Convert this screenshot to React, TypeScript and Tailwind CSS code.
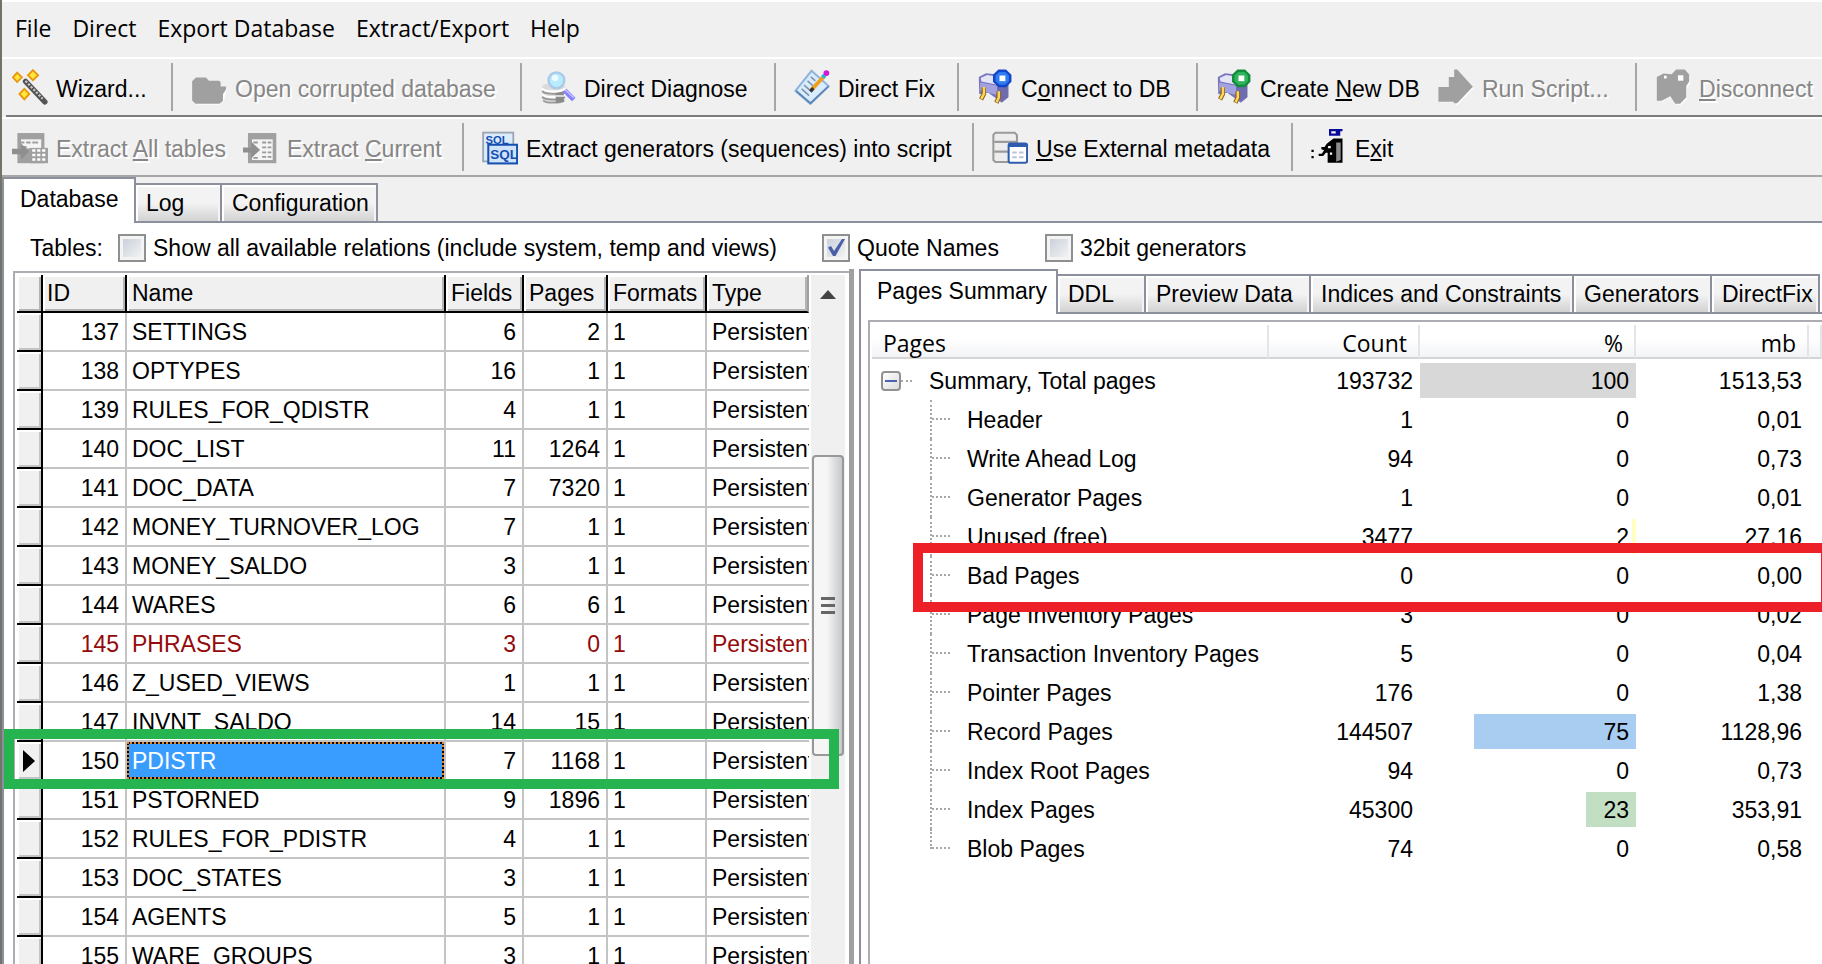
import type { ReactNode } from "react";
import clsx from "clsx";

type TableRow = {
  id: number;
  name: string;
  fields: number;
  pages: number;
};

type PageRow = {
  label: string;
  count: number;
  percent: number;
  mb: string;
  color?: string;
};

const tables: TableRow[] = [
  { id: 137, name: "SETTINGS", fields: 6, pages: 2 },
  { id: 138, name: "OPTYPES", fields: 16, pages: 1 },
  { id: 139, name: "RULES_FOR_QDISTR", fields: 4, pages: 1 },
  { id: 140, name: "DOC_LIST", fields: 11, pages: 1264 },
  { id: 141, name: "DOC_DATA", fields: 7, pages: 7320 },
  { id: 142, name: "MONEY_TURNOVER_LOG", fields: 7, pages: 1 },
  { id: 143, name: "MONEY_SALDO", fields: 3, pages: 1 },
  { id: 144, name: "WARES", fields: 6, pages: 6 },
  { id: 145, name: "PHRASES", fields: 3, pages: 0 },
  { id: 146, name: "Z_USED_VIEWS", fields: 1, pages: 1 },
  { id: 147, name: "INVNT_SALDO", fields: 14, pages: 15 },
  { id: 150, name: "PDISTR", fields: 7, pages: 1168 },
  { id: 151, name: "PSTORNED", fields: 9, pages: 1896 },
  { id: 152, name: "RULES_FOR_PDISTR", fields: 4, pages: 1 },
  { id: 153, name: "DOC_STATES", fields: 3, pages: 1 },
  { id: 154, name: "AGENTS", fields: 5, pages: 1 },
  { id: 155, name: "WARE_GROUPS", fields: 3, pages: 1 },
];

const selectedId = 150;

const pageRows: PageRow[] = [
  { label: "Header", count: 1, percent: 0, mb: "0,01" },
  { label: "Write Ahead Log", count: 94, percent: 0, mb: "0,73" },
  { label: "Generator Pages", count: 1, percent: 0, mb: "0,01" },
  { label: "Unused (free)", count: 3477, percent: 2, mb: "27,16", color: "bg-[#ffffc4]" },
  { label: "Bad Pages", count: 0, percent: 0, mb: "0,00" },
  { label: "Page Inventory Pages", count: 3, percent: 0, mb: "0,02" },
  { label: "Transaction Inventory Pages", count: 5, percent: 0, mb: "0,04" },
  { label: "Pointer Pages", count: 176, percent: 0, mb: "1,38" },
  { label: "Record Pages", count: 144507, percent: 75, mb: "1128,96", color: "bg-[#a9ccf1]" },
  { label: "Index Root Pages", count: 94, percent: 0, mb: "0,73" },
  { label: "Index Pages", count: 45300, percent: 23, mb: "353,91", color: "bg-[#c3dfc3]" },
  { label: "Blob Pages", count: 74, percent: 0, mb: "0,58" },
];

/* Icons, all drawn on a 16x16 grid */

const Icon = ({ children }: { children: ReactNode }) => (
  <svg viewBox="0 0 16 16" className="h-9 w-9 shrink-0" aria-hidden="true">
    {children}
  </svg>
);

const WizardIcon = () => (
  <Icon>
    <path d="M6 5.5 14.6 14.6" stroke="#555" strokeWidth="2.4" strokeLinecap="round" />
    <path d="M6 5.3 13.6 13.2" stroke="#c9c9c9" strokeWidth="1" strokeDasharray="1 .7" />
    <g fill="#ffe63b" stroke="#e8960c" strokeWidth=".8">
      <path d="M2.3 1.6 4.4 3.7 2.3 5.8.4 3.7z" />
      <path d="M9.3.5 11.6 2.8 9.3 5 7.1 2.8z" />
      <path d="M5.5 8.8 7.7 11.1 5.5 13.5 3.3 11.1z" />
    </g>
  </Icon>
);

const FolderIcon = () => (
  <Icon>
    <path d="M1.2 6 2.4 5h4.8l1.5 1.6h4.5v1.6h2.6v1l-1.3 5.2-1.6 1.4H2.6L1.2 14.6z" fill="#fff" />
    <path d="M.5 5.4 2.2 3.8h4.4L8 5.2h4.6l.6.8v1.8h2.4V9l-1.4 2.2v3l-1.5 1.2H2L.5 14z" fill="#a0a0a0" />
  </Icon>
);

const DiagnoseIcon = () => (
  <Icon>
    <path d="M1 7.5c0-1.6 10-1.6 10 0v6c0 1.8-10 1.8-10 0z" fill="#dcdcdc" />
    <path d="M1 8.7c1 1.7 9 1.7 10 0M1 11.2c1 1.7 9 1.7 10 0" fill="none" stroke="#fff" strokeWidth=".9" />
    <path
      d="M1 9.8c1 1.7 9 1.7 10 0M1 12.3c1 1.7 9 1.7 10 0M1.4 14c1 1.3 8 1.3 9.4 0"
      fill="none"
      stroke="#989898"
      strokeWidth=".8"
    />
    <path d="M7 10.8 10.6 10v4.5l-3.6.6z" fill="#8a8a8a" />
    <path d="M7 12h3.6" stroke="#eee" strokeWidth=".7" />
    <circle cx="7.3" cy="5" r="3.5" fill="#b9ebff" stroke="#a9cbe8" strokeWidth="1.1" />
    <circle cx="6.7" cy="4" r="1.4" fill="#fff" opacity=".8" />
    <path d="m11 9.6 4 4" stroke="#8482ff" strokeWidth="2.2" />
    <path d="m11.2 9.2 3.8 3.6" stroke="#c5c4ff" strokeWidth=".7" />
  </Icon>
);

const FixIcon = () => (
  <Icon>
    <path d="M7.8.8 15.4 7.6 7.3 15.5.6 9.7z" fill="#d9ecfb" stroke="#8fb4dc" strokeWidth=".9" />
    <path d="m1 9.8 6.3 5.4 8-7.5" fill="none" stroke="#5b86b8" strokeWidth=".8" />
    <path d="m7.5 3.5 2 1.8M6 5.3 9 8M4.5 7.2 8 10.3M3.4 8.8l3.3 3" stroke="#7d94b0" strokeWidth=".7" />
    <path d="M7.5 9.5 13.6 3" stroke="#f0a020" strokeWidth="1.7" />
    <path d="M7.3 9.9 8.6 8.5" stroke="#333" strokeWidth="1.5" />
    <path d="m12.7 3.8 1-1" stroke="#20b8d8" strokeWidth="1.9" />
    <circle cx="14.4" cy="1.8" r="1.3" fill="#d416d8" />
  </Icon>
);

const PlugIcon = ({ dark, light }: { dark: string; light: string }) => (
  <Icon>
    <path d="M.8 3.6 4 1.9l7 .8 3 3v6.8L11 15 8.4 13 5 10.5l-4 .7z" fill="#7976bd" />
    <path d="M1.6 4 4.5 2.7l6.5 1L9 7 2 5.6z" fill="#e4e4f8" />
    <path d="M1.4 6 9 7.4v4.2L1.4 9.6z" fill="#a3a2e0" />
    <path d="M9 7.4 13.8 5v7.4L11 14.4 9 11.6z" fill="#6f6cae" />
    <path d="M3 8.2v3L1.8 13.5M9.6 10v2.8l-1 2.2" fill="none" stroke="#8a6412" strokeWidth="2" />
    <path d="M3.1 8v3l-1.2 2.3M9.7 9.9v2.8l-1 2.1" fill="none" stroke="#ffd560" strokeWidth="1.1" />
    <path d="M9.5.2h3.4l2.4 2.3v3.2l-2.4 2.4H9.5L7.1 5.7V2.5z" fill={dark} />
    <path d="M9.9 1.3h2.7l1.6 1.6v2.4L12.6 7H9.9L8.2 5.3V2.9z" fill={light} />
    <rect x="10" y="2.9" width="2.6" height="2.5" fill="#fff" />
  </Icon>
);

const RunIcon = () => (
  <Icon>
    <path d="M.8 8.6h4.6V3.4h3V.9l7.5 7.5L8.6 16H8l-.5-1.2H.8z" fill="#fff" />
    <path d="M.2 8h4.6V3.6h2.4V.2h1.3l7 7.7-7 7.3H7v-.6H.2z" fill="#a0a0a0" />
  </Icon>
);

const DisconnectIcon = () => (
  <Icon>
    <path
      d="M1.6 4.6 4.6 3l3.4.4L9.6 1h3.8l2.2 2.2v3.2l-1.3 2v5.2L11.4 16H9.8l-2.4-3.2H5.8l-2.6 2L1.6 13z"
      fill="#fff"
    />
    <path
      d="M.8 3.6 3.8 2l3.6.3L9.4.2h3.8l2 2.2v3.2l-1.3 2v5L11.2 15.4H9l-2.2-3.3-3.8 2H.8z"
      fill="#a0a0a0"
    />
    <rect x="4" y="3" width="1.2" height="1.2" fill="#fff" />
    <rect x="10.2" y="2.8" width="2.4" height="2.4" fill="#fff" />
  </Icon>
);

const ExtractAllIcon = () => (
  <Icon>
    <path d="M2.4 1.8h12v13.4H2.4z" fill="#a0a0a0" />
    <path d="M4 4.6h9v4H4z" fill="#f4f4f4" />
    <path d="M4 6h1.5M6.3 6h2M9 6h2.6M4.5 8h2" stroke="#a0a0a0" strokeWidth=".8" />
    <path d="M8 8.4h8v6.8H8z" fill="#a0a0a0" />
    <path d="M9 9.6h6.4M9 11.6h6.4M9 13.6h6.4" stroke="#fff" strokeWidth="1.1" strokeDasharray="1.4 .8" />
    <path d="M0 8.8h4V6.4L7.6 10 4 13.6v-2.4H0z" fill="#8f8f8f" />
  </Icon>
);

const ExtractCurrentIcon = () => (
  <Icon>
    <path d="M2.2 1.8h12.6v13.4H2.2z" fill="#a0a0a0" />
    <path d="M4 4.6h9.2v9.2H4z" fill="#f4f4f4" />
    <path
      d="M8.5 6h1.8M11 6h1.6M8.5 8.2h1.8M11 8.2h1.6M8.5 10.4h1.8M11 10.4h1.6M8.5 12.4h1.8M11 12.4h1.6M4.6 6h2M4.6 12.8h2"
      stroke="#999"
      strokeWidth=".8"
    />
    <path d="M0 8.2h3.6V5.6l4 3.7-4 3.7v-2.6H0z" fill="#8f8f8f" />
  </Icon>
);

const SqlIcon = () => (
  <Icon>
    <rect x=".5" y="1.6" width="13.4" height="12.8" fill="#dcebfa" stroke="#9aa4b2" strokeWidth=".8" />
    <text x="1.6" y="6.6" className="font-['Liberation_Sans'] text-[5px] font-bold" fill="#1550b0">
      SQL
    </text>
    <rect x="2.8" y="7" width="12.8" height="8.3" fill="#cfe4fb" stroke="#1550b0" strokeWidth=".9" />
    <text x="3.7" y="13.4" className="font-['Liberation_Sans'] text-[6px] font-bold" fill="#1550b0">
      SQL
    </text>
  </Icon>
);

const MetadataIcon = () => (
  <Icon>
    <path d="M1.5 1.7h8.6l1 1v12H1.5l-.9-.9V2.6z" fill="#ededed" stroke="#9a9a9a" strokeWidth=".9" />
    <path d="M1 5.7h10M1 10h7" stroke="#9a9a9a" strokeWidth="1" />
    <rect x="7.4" y="6.4" width="8.2" height="8.6" rx=".8" fill="#fff" stroke="#2e5cb0" strokeWidth=".9" />
    <path d="M7.4 7.2h8.2" stroke="#2e5cb0" strokeWidth="1.6" />
    <path d="M9 10.4h2M12 10.4h2M9 12.6h2M12 12.6h2" stroke="#b9c4d8" strokeWidth=".9" />
  </Icon>
);

const ExitIcon = () => (
  <Icon>
    <path d="M8 0h6v1h-1v2H8zM9 1v1h2V1z" fill="#0a0a9c" fillRule="evenodd" />
    <path d="M8.4 5.4 10 4.2h4V15H7.4v-4.5H6.6L5.4 12H3.4v-1h1.4l1-1.6L4.6 9V8H6l1-1.4z" fill="#000" />
    <path d="M11.2 6h2v7.8l-2 .8z" fill="#8c8c8c" />
    <path d="M7.6 7.5h1.2v1H7.6zM8.4 10.4h1v1h-1z" fill="#fff" />
    <path d="M.2 9.2h1v1h-1zM.2 12h1v1h-1z" fill="#000" />
  </Icon>
);

/* Window parts */

type ToolButtonProps = {
  icon: ReactNode;
  width?: string;
  disabled?: boolean;
  children: ReactNode;
};

const ToolButton = ({ icon, width, disabled, children }: ToolButtonProps) => (
  <button
    type="button"
    disabled={disabled}
    className={clsx(
      "flex shrink-0 items-center gap-2 text-left whitespace-nowrap",
      width,
      disabled && "text-[#868686] [text-shadow:2px_2px_0_#fff]",
    )}
  >
    {icon}
    <span className="pt-1">{children}</span>
  </button>
);

const Separator = () => <div className="mr-[18px] h-12 w-0.5 shrink-0 bg-[#a6a6a6]" />;

const MainMenu = () => (
  <nav className="flex h-[57px] shrink-0 items-center gap-[21px] border-t-2 border-white pb-1 pl-[13px] font-['Open_Sans',sans-serif] text-[23px]">
    {["File", "Direct", "Export Database", "Extract/Export", "Help"].map((item) => (
      <button key={item} type="button" className="shrink-0">
        {item}
      </button>
    ))}
  </nav>
);

const Toolbars = () => (
  <div className="shrink-0 border-t-2 border-white">
    <div className="ml-1 flex h-[58px] items-center border-b-2 border-[#7c7c7c] pl-1.5">
      <ToolButton icon={<WizardIcon />} width="w-[159px]">
        Wizard...
      </ToolButton>
      <Separator />
      <ToolButton icon={<FolderIcon />} width="w-[329px]" disabled>
        Open corrupted database
      </ToolButton>
      <Separator />
      <ToolButton icon={<DiagnoseIcon />} width="w-[234px]">
        Direct Diagnose
      </ToolButton>
      <Separator />
      <ToolButton icon={<FixIcon />} width="w-[163px]">
        Direct Fix
      </ToolButton>
      <Separator />
      <ToolButton icon={<PlugIcon dark="#1246c8" light="#2f7df0" />} width="w-[219px]">
        C<u>o</u>nnect to DB
      </ToolButton>
      <Separator />
      <ToolButton icon={<PlugIcon dark="#138a3c" light="#2fb45c" />} width="w-[222px]">
        Create <u>N</u>ew DB
      </ToolButton>
      <ToolButton icon={<RunIcon />} width="w-[197px]" disabled>
        Run Script...
      </ToolButton>
      <Separator />
      <ToolButton icon={<DisconnectIcon />} disabled>
        <u>D</u>isconnect
      </ToolButton>
    </div>
    <div className="flex h-[60px] items-center border-t-2 border-b-2 border-t-white border-b-[#a6a6a6] pl-2.5">
      <ToolButton icon={<ExtractAllIcon />} width="w-[231px]" disabled>
        Extract <u>A</u>ll tables
      </ToolButton>
      <ToolButton icon={<ExtractCurrentIcon />} width="w-[219px]" disabled>
        Extract <u>C</u>urrent
      </ToolButton>
      <Separator />
      <ToolButton icon={<SqlIcon />} width="w-[490px]">
        Extract generators (sequences) into script
      </ToolButton>
      <Separator />
      <ToolButton icon={<MetadataIcon />} width="w-[299px]">
        <u>U</u>se External metadata
      </ToolButton>
      <Separator />
      <ToolButton icon={<ExitIcon />}>
        E<u>x</u>it
      </ToolButton>
    </div>
  </div>
);

type TabProps = {
  label: string;
  width: string;
  active?: boolean;
};

const Tab = ({ label, width, active }: TabProps) => (
  <button
    type="button"
    role="tab"
    aria-selected={Boolean(active)}
    className={clsx(
      "shrink-0 border-[#8c8f9c] text-left whitespace-nowrap",
      width,
      active
        ? "h-full border-t-2 border-r-2 bg-white pb-1 pl-4"
        : "h-10 border-2 border-l-0 bg-linear-to-b from-[#f3f3f3] from-50% to-[#d2d2d2] pl-2.5 shadow-[inset_2px_2px_0_#fff,inset_-2px_0_0_#f4f4f4]",
    )}
  >
    {label}
  </button>
);

type CheckboxProps = {
  label: string;
  width?: string;
  defaultChecked?: boolean;
};

const Checkbox = ({ label, width, defaultChecked }: CheckboxProps) => (
  <label className={clsx("flex shrink-0 items-center gap-[7px] whitespace-nowrap", width)}>
    <span className="grid h-7 w-7 place-items-center">
      <input
        type="checkbox"
        defaultChecked={defaultChecked}
        className="peer col-start-1 row-start-1 h-7 w-7 appearance-none border-2 border-[#8e8f8f] bg-linear-to-br from-[#c4ccd6] to-[#f8f8f8] shadow-[inset_0_0_0_3px_#f4f4f4]"
      />
      <svg
        viewBox="0 0 20 20"
        className="pointer-events-none invisible col-start-1 row-start-1 h-5 w-5 peer-checked:visible"
        aria-hidden="true"
      >
        <path d="M2 9.5 5 8l3 5L16 1h3L9.5 18H7z" fill="#4a5fa5" />
      </svg>
    </span>
    {label}
  </label>
);

const headCell =
  "border-r-2 border-b-2 border-black bg-[#f0f0f0] p-0 text-left font-normal shadow-[inset_2px_2px_0_#fff,inset_-2px_-2px_0_#b4b4b4]";
const bodyCell = "border-r-2 border-b-2 border-[#c4c4c4] p-0";

const TablesGrid = () => (
  <table className="w-[792px] table-fixed border-separate border-spacing-0">
    <colgroup>
      <col className="w-[26px]" />
      <col className="w-[84px]" />
      <col className="w-[319px]" />
      <col className="w-[78px]" />
      <col className="w-[84px]" />
      <col className="w-[99px]" />
      <col className="w-[102px]" />
    </colgroup>
    <thead>
      <tr className="h-[38px]">
        <th className={headCell} />
        <th className={clsx(headCell, "pl-1")}>ID</th>
        <th className={clsx(headCell, "pl-[5px]")}>Name</th>
        <th className={clsx(headCell, "pl-[5px]")}>Fields</th>
        <th className={clsx(headCell, "pl-[5px]")}>Pages</th>
        <th className={clsx(headCell, "pl-[5px]")}>Formats</th>
        <th className={clsx(headCell, "border-r-[#a0a0a0] pl-[5px]")}>Type</th>
      </tr>
    </thead>
    <tbody>
      {tables.map((row) => (
        <tr key={row.id} className={clsx("h-[39px]", row.pages === 0 && "text-[#930a0a]")}>
          <td className="border-r-2 border-b-2 border-black bg-[#f0f0f0] p-0 shadow-[inset_2px_2px_0_#fff,inset_-2px_-2px_0_#c4c4c4]">
            {row.id === selectedId && (
              <svg viewBox="0 0 12 22" className="ml-1.5 h-[22px] w-3" aria-hidden="true">
                <path d="M0 0 12 11 0 22z" />
              </svg>
            )}
          </td>
          <td className={clsx(bodyCell, "pr-1.5 text-right")}>{row.id}</td>
          <td className={clsx(bodyCell, row.id === selectedId ? "bg-black" : "pl-[5px]")}>
            {row.id === selectedId ? (
              <div className="flex h-[37px] items-center border-2 border-dotted border-[#e0862a] bg-[#399cff] bg-clip-padding pl-[3px] text-white">
                {row.name}
              </div>
            ) : (
              row.name
            )}
          </td>
          <td className={clsx(bodyCell, "pr-1.5 text-right")}>{row.fields}</td>
          <td className={clsx(bodyCell, "pr-1.5 text-right")}>{row.pages}</td>
          <td className={clsx(bodyCell, "pl-[5px]")}>1</td>
          <td className="overflow-hidden border-b-2 border-[#c4c4c4] p-0 pl-[5px]">Persistent</td>
        </tr>
      ))}
    </tbody>
  </table>
);

const GridScrollbar = () => (
  <div className="flex w-[34px] shrink-0 flex-col items-center bg-[#f0f0f0]">
    <svg viewBox="0 0 16 9" className="mt-[15px] h-[9px] w-4" aria-hidden="true">
      <path d="M8 0 16 9H0z" fill="#444" />
    </svg>
    <div className="mt-[156px] flex h-[301px] w-8 flex-col items-center justify-center gap-1 rounded-sm border-2 border-[#989898] bg-linear-to-r from-[#f6f6f6] from-45% to-[#c6c8cb]">
      <span className="h-[3px] w-3.5 bg-[#666]" />
      <span className="h-[3px] w-3.5 bg-[#666]" />
      <span className="h-[3px] w-3.5 bg-[#666]" />
    </div>
  </div>
);

const TablesPanel = () => (
  <section className="relative flex w-[850px] shrink-0 pt-0.5 pl-[9px]">
    <div className="flex w-[836px] shrink-0 gap-0.5 overflow-hidden border-t-2 border-l-2 border-[#abadb3] pt-0.5 pl-0.5">
      <div className="w-[792px] shrink-0">
        <TablesGrid />
      </div>
      <GridScrollbar />
    </div>
    <div className="-mt-0.5 w-[5px] shrink-0 bg-[#a0a0a0]" />
    <div className="absolute top-[460px] left-0 h-[60px] w-[835px] border-[10px] border-[#25b450]" />
  </section>
);

const PercentCell = ({ percent, color }: { percent: number; color?: string }) => (
  <td className="relative p-0 pr-[7px] text-right">
    {color && (
      <div className={clsx("absolute inset-y-0.5 right-0", color)} style={{ width: `${percent}%` }} />
    )}
    <span className="relative">{percent}</span>
  </td>
);

const treeHead =
  "flex h-[34px] items-center border-r-2 border-b-2 border-r-[#e4e5e8] border-b-[#d5d5d5] bg-linear-to-b from-white from-40% to-[#f3f4f6] pt-1";

const PagesTree = () => (
  <table className="w-full table-fixed border-separate border-spacing-0">
    <colgroup>
      <col className="w-[397px]" />
      <col className="w-[151px]" />
      <col className="w-[216px]" />
      <col className="w-[173px]" />
      <col />
    </colgroup>
    <thead className="font-['Open_Sans',sans-serif] text-[23px]">
      <tr className="h-9">
        <th className="p-0 align-top font-normal">
          <div className={clsx(treeHead, "pl-[11px]")}>Pages</div>
        </th>
        <th className="p-0 align-top font-normal">
          <div className={clsx(treeHead, "justify-end pr-[11px]")}>Count</div>
        </th>
        <th className="p-0 align-top font-normal">
          <div className={clsx(treeHead, "justify-end pr-[11px]")}>%</div>
        </th>
        <th className="p-0 align-top font-normal">
          <div className={clsx(treeHead, "justify-end pr-[11px]")}>mb</div>
        </th>
        <th className="p-0 align-top font-normal">
          <div className={clsx(treeHead, "border-r-0")} />
        </th>
      </tr>
    </thead>
    <tbody>
      <tr className="h-[39px]">
        <td className="p-0">
          <div className="flex items-center pl-[9px]">
            <button
              type="button"
              aria-label="Collapse Summary"
              className="flex h-5 w-5 items-center justify-center rounded-sm border-2 border-[#919191] bg-linear-to-br from-white to-[#dcdcdc]"
            >
              <span className="h-0.5 w-3 bg-[#4b63b0]" />
            </button>
            <span className="mr-[17px] w-[11px] border-b-2 border-dotted border-[#a8a8a8]" />
            Summary, Total pages
          </div>
        </td>
        <td className="p-0 pr-[7px] text-right">193732</td>
        <PercentCell percent={100} color="bg-[#d8d8d8]" />
        <td className="p-0 pr-[7px] text-right">1513,53</td>
        <td />
      </tr>
      {pageRows.map((row, index) => (
        <tr key={row.label} className="h-[39px]">
          <td className="p-0">
            <div className="flex h-[39px] items-center pl-[58px]">
              <div
                className={clsx(
                  "mr-[17px] w-5 border-l-2 border-dotted border-[#a8a8a8]",
                  index === pageRows.length - 1 ? "h-5 self-start" : "h-full",
                )}
              >
                <div className="h-5 border-b-2 border-dotted border-[#a8a8a8]" />
              </div>
              {row.label}
            </div>
          </td>
          <td className="p-0 pr-[7px] text-right">{row.count}</td>
          <PercentCell percent={row.percent} color={row.color} />
          <td className="p-0 pr-[7px] text-right">{row.mb}</td>
          <td />
        </tr>
      ))}
    </tbody>
  </table>
);

const DetailsPanel = () => (
  <section className="ml-[5px] flex min-w-0 flex-1 flex-col border-l-2 border-[#8c8f9c]">
    <div role="tablist" className="flex h-[45px] shrink-0 items-end">
      <Tab label="Pages Summary" width="w-[197px]" active />
      <Tab label="DDL" width="w-[88px]" />
      <Tab label="Preview Data" width="w-[165px]" />
      <Tab label="Indices and Constraints" width="w-[263px]" />
      <Tab label="Generators" width="w-[138px]" />
      <Tab label="DirectFix" width="w-[108px]" />
      <div className="flex-1 border-b-2 border-[#8c8f9c]" />
    </div>
    <div className="relative mt-1.5 ml-[7px] flex-1 border-t-2 border-l-2 border-[#abadb3] pt-[3px] pl-0.5">
      <PagesTree />
      <div className="absolute top-[221px] right-0 left-[43px] h-[69px] border-[10px] border-r border-[#ed2028]" />
    </div>
  </section>
);

const App = () => (
  <div className="flex h-screen flex-col overflow-hidden border-l-2 border-[#6f7568] bg-[#f0f0f0] font-['Liberation_Sans',Arial,sans-serif] text-[23px] leading-7 text-black">
    <MainMenu />
    <Toolbars />
    <div role="tablist" className="flex h-[46px] shrink-0 items-end border-l-2 border-[#8c8f9c]">
      <Tab label="Database" width="w-[132px]" active />
      <Tab label="Log" width="w-[86px]" />
      <Tab label="Configuration" width="w-[156px]" />
      <div className="flex-1 border-b-2 border-[#8c8f9c]" />
    </div>
    <main className="flex min-h-0 flex-1 flex-col border-l-2 border-[#8c8f9c] bg-white">
      <div className="flex h-[46px] shrink-0 items-center pt-1 pl-[26px]">
        <span className="w-[88px] shrink-0">Tables:</span>
        <Checkbox label="Show all available relations (include system, temp and views)" width="w-[704px]" />
        <Checkbox label="Quote Names" width="w-[223px]" defaultChecked />
        <Checkbox label="32bit generators" />
      </div>
      <div className="flex min-h-0 flex-1">
        <TablesPanel />
        <DetailsPanel />
      </div>
    </main>
  </div>
);

export default App;
